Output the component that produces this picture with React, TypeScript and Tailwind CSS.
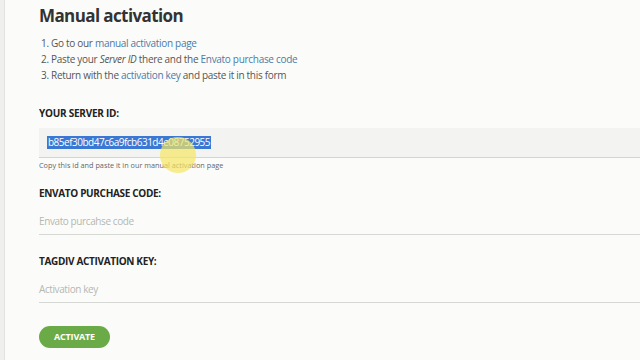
import React from 'react';

const font = { fontFamily: '"Open Sans", "DejaVu Sans", sans-serif' };

const Field: React.FC<{ label: string; placeholder: string; className: string }> = ({
  label,
  placeholder,
  className,
}) => (
  <div className={className}>
    <div className="text-[10px] font-bold text-[#222] leading-[14px] tracking-[-0.33px]">{label}</div>
    <div className="h-[35px] border-b border-[#d6d8d4] flex items-end pb-[6px]">
      <span className="text-[10px] text-[#b5b7b3] leading-[14px] tracking-[-0.4px]">{placeholder}</span>
    </div>
  </div>
);

export default function App() {
  return (
    <div style={font} className="w-[640px] h-[360px] overflow-hidden bg-[#fbfcfa] flex">
      {/* left edge strip */}
      <div className="w-[5px] bg-[#efefee] border-r border-[#e2e3e1]" />

      <div className="flex-1 pl-[34px] pt-[4px] relative">
        <h1 className="text-[17px] font-bold text-[#333] leading-[24px] tracking-[-0.6px]">Manual activation</h1>

        <ol className="mt-[7px] text-[10px] text-[#555] leading-[16px] pl-[2px] tracking-[-0.3px]">
          <li>
            1. Go to our <span className="text-[#4a7aa8]">manual activation page</span>
          </li>
          <li>
            2. Paste your <em>Server ID</em> there and the{' '}
            <span className="text-[#4a7aa8]">Envato purchase code</span>
          </li>
          <li>
            3. Return with the <span className="text-[#4a7aa8]">activation key</span> and paste it in this form
          </li>
        </ol>

        <div className="mt-[23px] text-[10px] font-bold text-[#222] leading-[14px] tracking-[-0.25px]">
          YOUR SERVER ID:
        </div>
        <div className="mt-[8px] h-[30px] bg-[#f3f4f2] border-b border-[#d3d5d1] flex items-center pl-[8px]">
          <span className="text-[10px] text-white bg-[#3a78d4] leading-[13px] px-[1px] tracking-[-0.5px]">
            b85ef30bd47c6a9fcb631d4e08752955
          </span>
        </div>
        <div className="mt-[2px] text-[7.3px] text-[#666] leading-[10px]">
          Copy this id and paste it in our manual activation page
        </div>

        <Field className="mt-[16px]" label="ENVATO PURCHASE CODE:" placeholder="Envato purcahse code" />
        <Field className="mt-[19px]" label="TAGDIV ACTIVATION KEY:" placeholder="Activation key" />

        <button className="mt-[23px] w-[71px] h-[22px] rounded-full bg-[#6aab47] text-white text-[9px] font-bold flex items-center justify-center tracking-[-0.2px]">
          ACTIVATE
        </button>

        {/* cursor highlight */}
        <div className="absolute left-[155px] top-[137px] w-[36px] h-[36px] rounded-full bg-[#f5e663]/70" />
      </div>
    </div>
  );
}
